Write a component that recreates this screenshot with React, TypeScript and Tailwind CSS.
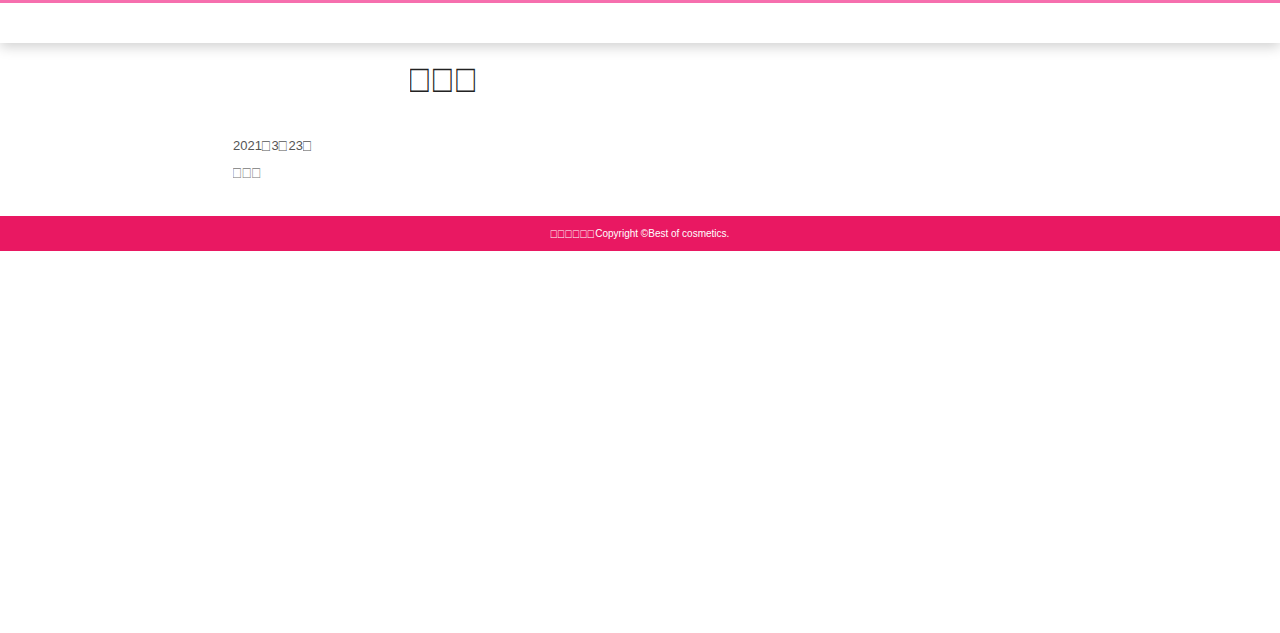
// placeholder glyphs, stretched to the shape of a missing-glyph box
function Tofu({ n }: { n: number }) {
  return <span className="inline-block scale-y-[1.25] tracking-[0.14em]">{"□".repeat(n)}</span>;
}

export default function App() {
  return (
    <div className="min-h-screen bg-white text-[#333] font-['Liberation_Sans','DejaVu_Sans',sans-serif]">
      <header className="relative z-10 h-[43px] border-t-[3px] border-[#f66fae] bg-white shadow-[0_4px_12px_rgba(0,0,0,0.18)]" />

      <main className="pl-[233px] pt-[18px] pb-[35px]">
        <h1 className="pl-[177px] text-[31px] leading-[36px] font-normal text-[#222]">
          <Tofu n={3} />
        </h1>
        <div className="mt-[41px] text-[13px] leading-[16px] text-[#555]">
          <p>
            2021<Tofu n={1} />3<Tofu n={1} />23<Tofu n={1} />
          </p>
          <p className="mt-[11px] text-[#777]">
            <Tofu n={3} />
          </p>
        </div>
      </main>

      <footer className="flex h-[35px] items-center justify-center bg-[#e91862] text-[10px] text-white">
        <span>
          <Tofu n={6} />
          Copyright ©Best of cosmetics.
        </span>
      </footer>
    </div>
  );
}
